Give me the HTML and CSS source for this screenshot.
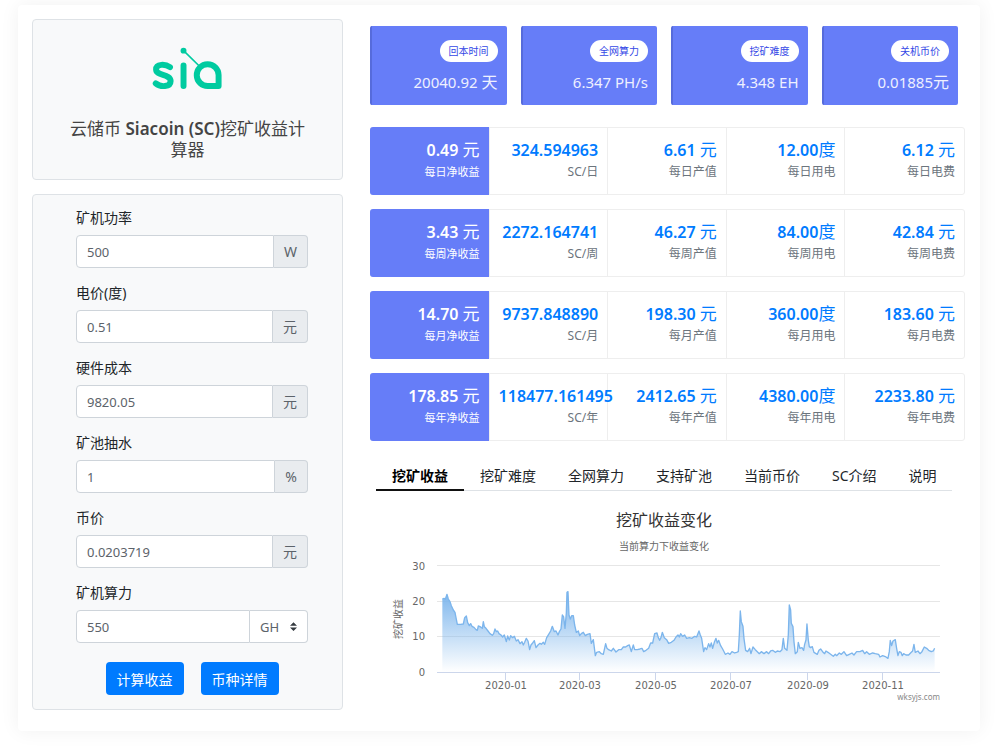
FILE: index.html
```html
<!DOCTYPE html>
<html lang="zh-CN">

<head>
	<meta charset="UTF-8">
	<meta name="viewport" content="width=device-width, initial-scale=1.0">
	<title>云储币 Siacoin (SC)挖矿收益计算器</title>
	<link rel="stylesheet" href="styles.css">
</head>

<body>
	<div class="page">
		<!-- 左侧 -->
		<div class="side">
			<div class="box coin">
				<svg class="coin-logo" viewBox="456 140 212 130" aria-label="sia">
					<g fill="none" stroke="#00cba0" stroke-width="18" stroke-linecap="round" stroke-linejoin="round">
						<path d="M509 201C495 191 467 190 467 208C467 228 511 220 511 243C511 262 480 262 466 250" />
						<path d="M550 196V258" />
						<path d="M656 258H624A33 33 0 1 1 656 225Z" />
						<path d="M550 151L596 196" stroke-width="5" />
					</g>
					<circle cx="550" cy="151" r="9" fill="#00cba0" />
				</svg>
				<h1 class="coin-name">云储币 <span class="en">Siacoin (SC)</span>挖矿收益计算器</h1>
			</div>
			<form class="box form">
				<label for="power">矿机功率</label>
				<div class="input-group">
					<input type="text" id="power" value="500">
					<span class="addon">W</span>
				</div>
				<label for="elec">电价(度)</label>
				<div class="input-group">
					<input type="text" id="elec" value="0.51">
					<span class="addon">元</span>
				</div>
				<label for="cost">硬件成本</label>
				<div class="input-group">
					<input type="text" id="cost" value="9820.05">
					<span class="addon">元</span>
				</div>
				<label for="fee">矿池抽水</label>
				<div class="input-group">
					<input type="text" id="fee" value="1">
					<span class="addon">%</span>
				</div>
				<label for="price">币价</label>
				<div class="input-group">
					<input type="text" id="price" value="0.0203719">
					<span class="addon">元</span>
				</div>
				<label for="hash">矿机算力</label>
				<div class="input-group">
					<input type="text" id="hash" value="550">
					<select class="unit-select" aria-label="算力单位">
						<option>GH</option>
					</select>
				</div>
				<div class="btns">
					<button type="button" class="btn">计算收益</button>
					<button type="button" class="btn">币种详情</button>
				</div>
			</form>
		</div>

		<!-- 右侧 -->
		<div class="main">
			<div class="stats">
				<div class="stat"><span class="pill">回本时间</span><p>20040.92 <span class="cn">天</span></p></div>
				<div class="stat"><span class="pill">全网算力</span><p>6.347 PH/s</p></div>
				<div class="stat"><span class="pill">挖矿难度</span><p>4.348 EH</p></div>
				<div class="stat"><span class="pill">关机币价</span><p>0.01885<span class="cn">元</span></p></div>
			</div>

			<div class="rows">
				<div class="row">
					<div class="cell net"><b>0.49 <span class="unit">元</span></b><small>每日净收益</small></div>
					<div class="cell"><b>324.594963</b><small>SC/日</small></div>
					<div class="cell"><b>6.61 <span class="unit">元</span></b><small>每日产值</small></div>
					<div class="cell"><b>12.00<span class="unit">度</span></b><small>每日用电</small></div>
					<div class="cell"><b>6.12 <span class="unit">元</span></b><small>每日电费</small></div>
				</div>
				<div class="row">
					<div class="cell net"><b>3.43 <span class="unit">元</span></b><small>每周净收益</small></div>
					<div class="cell"><b>2272.164741</b><small>SC/周</small></div>
					<div class="cell"><b>46.27 <span class="unit">元</span></b><small>每周产值</small></div>
					<div class="cell"><b>84.00<span class="unit">度</span></b><small>每周用电</small></div>
					<div class="cell"><b>42.84 <span class="unit">元</span></b><small>每周电费</small></div>
				</div>
				<div class="row">
					<div class="cell net"><b>14.70 <span class="unit">元</span></b><small>每月净收益</small></div>
					<div class="cell"><b>9737.848890</b><small>SC/月</small></div>
					<div class="cell"><b>198.30 <span class="unit">元</span></b><small>每月产值</small></div>
					<div class="cell"><b>360.00<span class="unit">度</span></b><small>每月用电</small></div>
					<div class="cell"><b>183.60 <span class="unit">元</span></b><small>每月电费</small></div>
				</div>
				<div class="row">
					<div class="cell net"><b>178.85 <span class="unit">元</span></b><small>每年净收益</small></div>
					<div class="cell"><b>118477.161495</b><small>SC/年</small></div>
					<div class="cell"><b>2412.65 <span class="unit">元</span></b><small>每年产值</small></div>
					<div class="cell"><b>4380.00<span class="unit">度</span></b><small>每年用电</small></div>
					<div class="cell"><b>2233.80 <span class="unit">元</span></b><small>每年电费</small></div>
				</div>
			</div>

			<nav class="tabs">
				<a href="#chart" class="active">挖矿收益</a>
				<a href="#diff">挖矿难度</a>
				<a href="#net">全网算力</a>
				<a href="#pool">支持矿池</a>
				<a href="#coin">当前币价</a>
				<a href="#about">SC介绍</a>
				<a href="#help">说明</a>
			</nav>

			<div class="chart" id="chart">
				<svg viewBox="0 0 576 217">
					<defs>
						<linearGradient id="area" x1="0" y1="0" x2="0" y2="1">
							<stop offset="0" stop-color="#7cb5ec" />
							<stop offset="1" stop-color="#7cb5ec" stop-opacity="0" />
						</linearGradient>
					</defs>
					<text class="title" x="288" y="35">挖矿收益变化</text>
					<text class="subtitle" x="288" y="59">当前算力下收益变化</text>
					<!-- 网格 -->
					<path class="grid" d="M61 74.5H564M61 110.5H564M61 145.5H564" />
					<path class="axis" d="M61 181.5H564M129.5 181V189M203.5 181V189M279.5 181V189M354.5 181V189M431.5 181V189M506.5 181V189" />
					<g transform="translate(54 64) scale(.3333)">
						<path id="fill" fill="url(#area)" />
						<path id="line" class="line" />
					</g>
					<g class="y-labels">
						<text x="49" y="79">30</text>
						<text x="49" y="114">20</text>
						<text x="49" y="149">10</text>
						<text x="49" y="185">0</text>
					</g>
					<text class="y-title" transform="translate(26 128) rotate(-90)">挖矿收益</text>
					<g class="x-labels">
						<text x="130" y="198">2020-01</text>
						<text x="204" y="198">2020-03</text>
						<text x="280" y="198">2020-05</text>
						<text x="355" y="198">2020-07</text>
						<text x="432" y="198">2020-09</text>
						<text x="507" y="198">2020-11</text>
					</g>
					<text class="credit" x="564" y="209">wksyjs.com</text>
				</svg>
			</div>
		</div>
	</div>
	<script src="chart.js"></script>
</body>

</html>
```

FILE: styles.css
```css
* {
	box-sizing: border-box;
}

body {
	margin: 0;
	padding: 5px 20px 23px 18px;
	background: #fff;
	color: #212529;
	font-family: "Noto Sans", "Noto Sans CJK SC", sans-serif;
	font-size: 14px;
	line-height: 21px;
}

p,
h1 {
	margin: 0;
}

.page {
	display: grid;
	grid-template-columns: 311px 1fr;
	gap: 27px;
	padding: 14px 15px 21px 14px;
	background: #fff;
	border-radius: 4px;
	box-shadow: 0 0 20px rgba(0, 0, 0, .06);
}

/* 左侧 */

.side {
	display: flex;
	flex-direction: column;
	gap: 14px;
}

.box {
	background: #f8f9fa;
	border: 1px solid #dee2e6;
	border-radius: 4px;
}

.coin {
	padding: 27px 34px 19px;
	text-align: center;
}

.coin-logo {
	display: block;
	width: 71px;
	height: 43px;
	margin: 0 auto 28px;
}

.coin-name {
	color: #444;
	font-size: 17px;
	font-weight: 400;
	line-height: 21px;
}

.coin-name .en {
	font-weight: 600;
}

.form {
	flex: 1;
	padding: 12px 34px 14px 43px;
}

.form label {
	display: block;
	margin-bottom: 7px;
}

.input-group {
	display: flex;
	height: 33px;
	margin-bottom: 14px;
}

.input-group input {
	flex: 1;
	min-width: 0;
	padding: 1px 10px 0;
	border: 1px solid #ced4da;
	border-radius: 4px 0 0 4px;
	background: #fff;
	color: #5c636a;
	font-family: inherit;
	font-size: 13px;
}

.addon {
	padding: 5px 10px;
	border: 1px solid #ced4da;
	border-left: 0;
	border-radius: 0 4px 4px 0;
	background: #e9ecef;
	color: #5c636a;
}

.unit-select {
	width: 58px;
	padding: 0 10px;
	border: 1px solid #ced4da;
	border-left: 0;
	border-radius: 0 4px 4px 0;
	background: #fff url("data:image/svg+xml,%3Csvg xmlns='http://www.w3.org/2000/svg' viewBox='0 0 4 5'%3E%3Cpath fill='%23343a40' d='M2 0L0 2h4zm0 5L0 3h4z'/%3E%3C/svg%3E") no-repeat right 10px center / 7px 9px;
	color: #5c636a;
	font-family: inherit;
	font-size: 13px;
	-webkit-appearance: none;
	appearance: none;
}

.btns {
	display: flex;
	justify-content: center;
	gap: 17px;
	margin-top: 19px;
}

.btn {
	height: 33px;
	padding: 0 11px;
	border: 0;
	border-radius: 4px;
	background: #007bff;
	color: #fff;
	font-family: inherit;
	font-size: 14px;
}

/* 右侧 */

.main {
	min-width: 0;
	padding-top: 7px;
}

.stats {
	display: grid;
	grid-template-columns: repeat(4, 1fr);
	gap: 14px;
	margin-bottom: 22px;
	padding-right: 7px;
}

.stat {
	height: 79px;
	padding: 14px 9px 0 0;
	border-left: 2px solid #566bdb;
	border-radius: 2px;
	background: #667df8;
	color: #eef0ff;
	text-align: right;
}

.stat p {
	margin-top: 8px;
	font-size: 15px;
	line-height: 24px;
}

.stat .cn {
	font-size: 16px;
}

.pill {
	display: block;
	width: fit-content;
	margin-left: auto;
	padding: 0 9px;
	border-radius: 11px;
	background: #fff;
	color: #3448e6;
	font-size: 10px;
	line-height: 22px;
}

.rows {
	display: grid;
	gap: 14px;
}

.row {
	display: grid;
	grid-template-columns: repeat(5, minmax(0, 1fr));
	height: 68px;
	border: 1px solid #eee;
	border-radius: 3px;
}

.cell {
	padding: 12px 9px 0;
	border-right: 1px solid #eee;
	color: #007bff;
	text-align: right;
	white-space: nowrap;
}

.cell:last-child {
	border-right: 0;
}

.cell b,
.cell small {
	display: block;
}

.cell b {
	font-size: 16px;
	font-weight: 600;
	line-height: 20px;
}

.cell .unit {
	font-size: 17px;
	font-weight: 400;
}

.cell small {
	color: #6c757d;
	font-size: 12px;
	line-height: 24px;
}

.cell.net {
	margin: -1px 0 -1px -1px;
	padding-top: 13px;
	border-radius: 3px 0 0 3px;
	background: #667df8;
	color: #fff;
}

.net small {
	color: #fff;
	font-size: 11px;
}

.tabs {
	display: flex;
	margin: 21px 13px 0 6px;
	border-bottom: 1px solid #dee2e6;
}

.tabs a {
	padding: 3px 16px;
	color: #212529;
	text-decoration: none;
	white-space: nowrap;
}

.tabs .active {
	margin-bottom: -1px;
	border-bottom: 2px solid #111;
	color: #000;
	font-weight: 700;
}

/* 图表 */

.chart {
	margin: 0 13px 0 6px;
}

.chart svg {
	display: block;
	width: 100%;
}

.chart text {
	fill: #666;
	font-size: 10px;
}

.chart text.title {
	fill: #333;
	font-size: 16px;
	text-anchor: middle;
}

.chart .subtitle,
.chart .y-title,
.x-labels {
	text-anchor: middle;
}

.y-labels {
	text-anchor: end;
}

.x-labels,
.y-labels {
	font-family: "DejaVu Sans", sans-serif;
}

.chart text.credit {
	fill: #888;
	font-size: 8px;
	text-anchor: end;
}

.grid {
	fill: none;
	stroke: #e6e6e6;
}

.axis {
	fill: none;
	stroke: #ccd6eb;
}

.line {
	fill: none;
	stroke: #7cb5ec;
	stroke-width: 4;
	stroke-linejoin: round;
}
```

FILE: chart.js
```js
// 收益曲线, 每段 x 从 start 开始
var parts = [
	{
		start: 0,
		points: '37,132 42,130 46,133 51,118 55,132 60,140 64,152 70,165 75,172 78,188 82,208 92,208 100,207 104,188 109,183 113,203 118,212 122,206 126,214 132,217 138,224 142,226 145,213 150,215 157,220 160,200 163,215 168,220 174,228 180,236 187,241 191,236 195,222 199,230 203,228 207,236 213,240 218,246 223,240 229,260 233,243 238,255 242,242 248,248 253,244 259,258 264,254 270,266 276,260 280,270 284,262 289,250 294,258 299,284 303,270 308,264 313,257 318,278 324,270 330,265 334,268 340,262 344,268 350,248 356,238 362,228 367,214 373,230 378,228 384,240 388,230 393,222 397,180 401,186 405,220 409,175 411,112 414,110 417,180 421,192 425,182 430,182 434,210 439,232 445,228 449,242 454,236 460,232 466,242 472,238 480,236 484,265 490,254 496,302 500,292 508,290 514,296'
	},
	{
		start: 510,
		points: '10,298 17,266 21,280 26,284 34,288 40,280 48,291 56,284 64,284 70,276 77,276 83,272 88,270 94,290 100,270 104,284 112,284 120,282 126,280 131,290 138,286 146,280 152,264 158,264 164,236 171,234 175,248 179,256 183,248 187,232 193,248 200,254 206,265 214,262 222,256 228,246 234,240 238,246 242,236 248,244 254,240 260,250 268,248 276,250 284,244 290,246 297,228 301,240 305,250 311,290 315,278 320,284 326,266 330,276 334,264 338,280 343,262 348,250 352,264 356,256 362,272 368,282 376,298 384,294 390,298 396,290 404,294 410,292 415,290 418,240 421,168 424,200 429,214 432,250 437,286 443,290 449,280 453,296 459,276 466,284 472,290 478,296 484,290 492,296 500,290 506,296 512,288 518,286 526,292'
	},
	{
		start: 1020,
		points: '22,288 30,290 36,284 40,250 44,280 51,286 55,240 58,150 62,165 64,205 69,215 72,260 76,296 82,290 85,262 90,280 96,278 101,286 104,268 108,255 111,207 115,255 118,275 122,278 127,275 132,292 142,298 147,286 152,282 158,290 164,296 168,288 174,292 182,298 190,304 196,298 200,302 208,294 214,298 222,290 230,302 238,298 246,294 252,300 260,290 270,290 278,286 284,296 290,290 298,298 308,294 316,296 326,298 330,306 338,302 348,306 354,310 358,290 361,256 365,272 369,258 376,254 380,280 384,302 388,290 393,292 397,302 401,296 408,300 416,300 424,292 428,288 432,268 436,292 444,288 450,296 456,290 463,276 470,280 476,286 484,290 490,288 494,280'
	}
];

var list = [];
parts.forEach(function (part) {
	part.points.split(' ').forEach(function (p) {
		var xy = p.split(',');
		list.push((part.start + Number(xy[0])) + ' ' + xy[1]);
	});
});

var d = 'M' + list.join('L');
document.getElementById('line').setAttribute('d', d);
document.getElementById('fill').setAttribute('d', d + 'V351H37Z');
```
